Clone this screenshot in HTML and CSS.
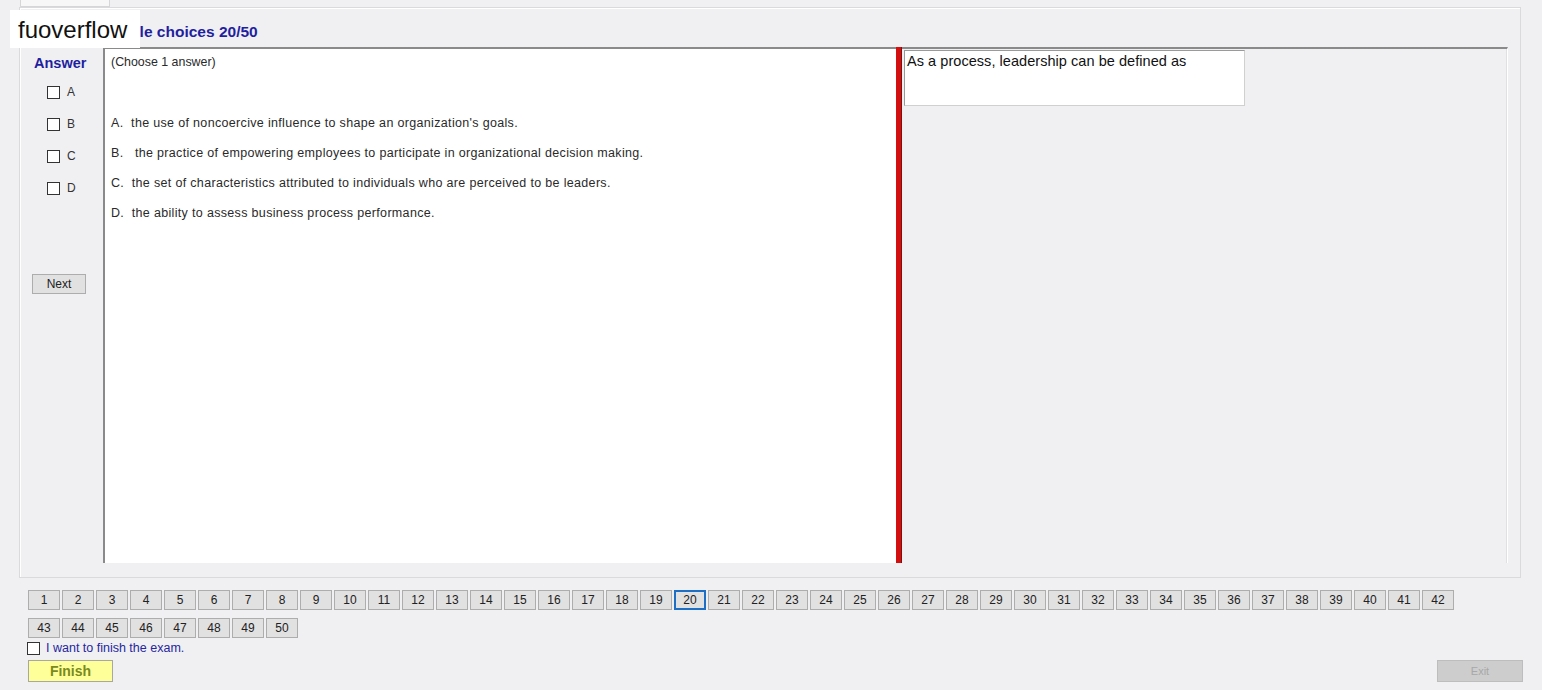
FILE: index.html
```html
<!DOCTYPE html>
<html lang="en">
<head>
  <meta charset="UTF-8" />
  <title>Exam</title>
  <link rel="stylesheet" href="styles.css">
</head>
<body>
  <div class="watermark">fuoverflow</div>

  <div class="tabstrip"><div class="tab"></div></div>

  <div class="tabpage">
    <div class="title">Multiple choices 20/50</div>

    <div class="work">
      <div class="answers">
        <div class="answer-label">Answer</div>
        <label class="opt first"><span class="box"></span>A</label>
        <label class="opt"><span class="box"></span>B</label>
        <label class="opt"><span class="box"></span>C</label>
        <label class="opt"><span class="box"></span>D</label>
        <button class="btn next">Next</button>
      </div>

      <div class="question">
        <p class="hint">(Choose 1 answer)</p>
        <p class="choice">A.&nbsp; the use of noncoercive influence to shape an organization's goals.</p>
        <p class="choice">B.&nbsp;&nbsp; the practice of empowering employees to participate in organizational decision making.</p>
        <p class="choice">C.&nbsp; the set of characteristics attributed to individuals who are perceived to be leaders.</p>
        <p class="choice">D.&nbsp; the ability to assess business process performance.</p>
      </div>

      <div class="splitter"></div>

      <div class="side">
        <div class="stem">As a process, leadership can be defined as</div>
      </div>
    </div>
  </div>

  <div class="numbers" id="numbers"></div>

  <div class="footer">
    <div class="finish-col">
      <label class="confirm"><span class="box"></span>I want to finish the exam.</label>
      <button class="btn finish">Finish</button>
    </div>
    <button class="btn exit" disabled>Exit</button>
  </div>

  <script>
    const grid = document.getElementById('numbers');
    for (let i = 1; i <= 50; i++) {
      const b = document.createElement('button');
      b.className = 'btn num' + (i === 20 ? ' current' : '');
      b.textContent = i;
      grid.appendChild(b);
    }
  </script>
</body>
</html>
```

FILE: styles.css
```css
body {
  margin: 0;
  background-color: #f0f0f3;
  font-family: 'Liberation Sans', Arial, sans-serif;
  color: #1e1e1e;
  width: 1542px;
  height: 690px;
  overflow: hidden;
  position: relative;
}

.watermark {
  position: absolute;
  left: 10px;
  top: 10px;
  width: 122px;
  height: 38px;
  padding-left: 8px;
  background: #ffffff;
  font-size: 24px;
  line-height: 40px;
  color: #111;
  z-index: 2;
}

.tabstrip {
  height: 7px;
  padding-left: 20px;
}

.tab {
  width: 90px;
  height: 7px;
  box-sizing: border-box;
  border: 1px solid #d6d6d9;
  border-top: none;
  background: #f7f7f8;
}

.tabpage {
  margin-left: 19px;
  width: 1502px;
  height: 571px;
  box-sizing: border-box;
  border: 1px solid #dadadd;
  box-shadow: inset 1px 1px 0 #ffffff;
  display: flex;
  flex-direction: column;
}

.title {
  height: 39px;
  padding-left: 74px;
  box-sizing: border-box;
  padding-top: 15px;
  font-size: 15.5px;
  font-weight: bold;
  color: #1f1fa0;
}

.work {
  display: flex;
  height: 516px;
  margin-right: 12px;
}

.answers {
  width: 83px;
  display: flex;
  flex-direction: column;
}

.answer-label {
  margin: 8px 0 0 14px;
  font-size: 14.5px;
  font-weight: bold;
  color: #1f1fa0;
}

.opt {
  display: flex;
  align-items: center;
  height: 32px;
  margin-left: 27px;
  font-size: 12px;
  color: #333;
}

.opt.first {
  margin-top: 5px;
}

.box {
  width: 11px;
  height: 11px;
  border: 1px solid #333;
  background: #fff;
  margin-right: 7px;
}

.btn {
  font-family: 'Liberation Sans', Arial, sans-serif;
  font-size: 12px;
  color: #222;
  background: #e1e1e1;
  border: 1px solid #adadad;
  padding: 0;
  cursor: pointer;
}

.next {
  margin: 70px 0 0 12px;
  width: 54px;
  height: 20px;
}

.question {
  width: 793px;
  box-sizing: border-box;
  background: #ffffff;
  border-top: 2px solid #8a8a8a;
  border-left: 2px solid #8a8a8a;
  padding: 6px 0 0 6px;
}

.question p {
  margin: 0;
  color: #2a2a2a;
}

.hint {
  height: 61px;
  font-size: 12.4px;
}

.choice {
  height: 30px;
  font-size: 12.5px;
  letter-spacing: 0.33px;
}

.splitter {
  width: 5px;
  background: #d40f0f;
  border-right: 1px solid #7a1010;
}

.side {
  flex: 1;
  border-top: 2px solid #8a8a8a;
  border-right: 1px solid #ffffff;
  box-shadow: inset -1px 0 0 #e0e0e3;
  padding: 1px 0 0 2px;
}

.stem {
  width: 341px;
  height: 56px;
  box-sizing: border-box;
  background: #ffffff;
  border: 1px solid #d0d0d0;
  border-top-color: #9a9a9a;
  border-left-color: #9a9a9a;
  padding: 2px 0 0 2px;
  font-size: 14.5px;
  letter-spacing: 0.05px;
  color: #111;
}

.numbers {
  display: grid;
  grid-template-columns: repeat(42, 32px);
  column-gap: 2px;
  row-gap: 8px;
  margin: 12px 0 0 28px;
}

.num {
  height: 20px;
}

.num.current {
  border: 2px solid #1c6fc4;
}

.footer {
  display: flex;
  justify-content: space-between;
  align-items: flex-end;
  margin: 3px 19px 0 27px;
}

.finish-col {
  display: flex;
  flex-direction: column;
}

.confirm {
  display: flex;
  align-items: center;
  font-size: 12.5px;
  color: #2626a0;
  height: 14px;
}

.confirm .box {
  width: 11px;
  height: 11px;
  margin-right: 6px;
}

.finish {
  margin: 5px 0 0 1px;
  width: 85px;
  height: 22px;
  background: #ffff99;
  border: 1px solid #a8a8a0;
  font-size: 14px;
  font-weight: bold;
  color: #7a8a1c;
}

.exit {
  width: 86px;
  height: 22px;
  background: #cdcdcd;
  border: 1px solid #bdbdbd;
  color: #a8a8a8;
  font-size: 11px;
  cursor: default;
}
```
